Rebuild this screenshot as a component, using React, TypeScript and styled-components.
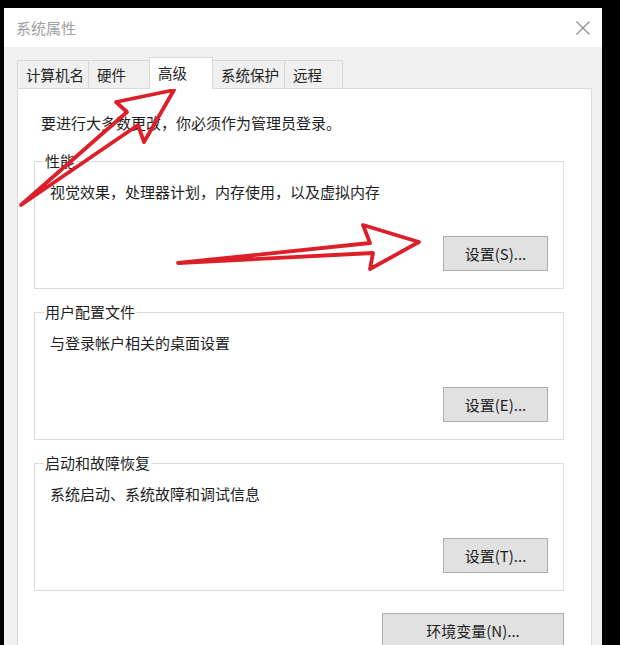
import React from "react";
import styled, { createGlobalStyle } from "styled-components";

const GlobalStyle = createGlobalStyle`
  html, body {
    margin: 0;
    padding: 0;
    background: #000;
  }
  body {
    font-family: "Noto Sans CJK SC", "Noto Sans", sans-serif;
    color: #1e1e1e;
  }
`;

const Page = styled.div`
  position: relative;
  width: 620px;
  height: 645px;
  overflow: hidden;
  background: #000;
  padding: 8px 18px 0 4px;
  box-sizing: border-box;
`;

const Window = styled.div`
  width: 598px;
  height: 700px;
  background: #f0f0f0;
  display: flex;
  flex-direction: column;
`;

const TitleBar = styled.div`
  height: 39px;
  flex: 0 0 39px;
  background: #fff;
  display: flex;
  align-items: center;
  justify-content: space-between;
  padding: 0 11px 0 12px;
  box-sizing: border-box;
`;

const Title = styled.span`
  font-size: 15px;
  line-height: 20px;
  color: #a0a0a0;
`;

const CloseButton = styled.div`
  width: 16px;
  height: 16px;
  display: flex;
  align-items: center;
  justify-content: center;
`;

const Body = styled.div`
  padding: 10px 0 0 13px;
  display: flex;
  flex-direction: column;
`;

const TabStrip = styled.div`
  display: flex;
  align-items: flex-end;
  height: 32px;
  margin-bottom: -1px;
  position: relative;
  z-index: 1;
`;

const Tab = styled.div<{ $w: number; $active?: boolean }>`
  width: ${(p) => p.$w}px;
  box-sizing: border-box;
  height: ${(p) => (p.$active ? 32 : 28)}px;
  margin-bottom: ${(p) => (p.$active ? 0 : 1)}px;
  margin-left: -1px;
  &:first-child {
    margin-left: 0;
  }
  background: ${(p) => (p.$active ? "#fff" : "#f0f0f0")};
  border: 1px solid #d9d9d9;
  border-bottom: none;
  display: flex;
  align-items: center;
  padding: 0 0 ${(p) => (p.$active ? 2 : 0)}px 8px;
  font-size: 14.5px;
  color: #222;
  white-space: nowrap;
  position: relative;
  z-index: ${(p) => (p.$active ? 2 : 1)};
`;

const Panel = styled.div`
  width: 575px;
  box-sizing: border-box;
  background: #fff;
  border: 1px solid #d9d9d9;
  padding: 24px 27px 40px 16px;
  display: flex;
  flex-direction: column;
`;

const Intro = styled.p`
  margin: 0 0 18px 0;
  padding-left: 7px;
  font-size: 15px;
  line-height: 20px;
`;

const Group = styled.fieldset`
  margin: 0 0 13px 0;
  width: 530px;
  box-sizing: border-box;
  border: 1px solid #dcdcdc;
  padding: 0 0 0 9px;
  min-width: 0;
`;

const GroupLabel = styled.legend`
  padding: 0 1px;
  font-size: 15px;
  line-height: 20px;
  color: #1e1e1e;
`;

const GroupBody = styled.div`
  padding: 11px 15px 17px 6px;
  display: flex;
  flex-direction: column;
`;

const Description = styled.div`
  font-size: 15px;
  line-height: 20px;
`;

const ButtonRow = styled.div<{ $top: number }>`
  display: flex;
  justify-content: flex-end;
  margin-top: ${(p) => p.$top}px;
`;

const Button = styled.button<{ $w: number }>`
  width: ${(p) => p.$w}px;
  height: 35px;
  box-sizing: border-box;
  background: #e1e1e1;
  border: 1px solid #adadad;
  border-radius: 0;
  font-family: "Noto Sans CJK SC", "Noto Sans", sans-serif;
  font-size: 15px;
  color: #1e1e1e;
  padding: 0;
  display: flex;
  align-items: center;
  justify-content: center;
`;

const BottomRow = styled.div`
  display: flex;
  justify-content: flex-end;
  width: 530px;
  margin-top: 9px;
`;

const Overlay = styled.svg`
  position: absolute;
  left: 0;
  top: 0;
  width: 620px;
  height: 645px;
  pointer-events: none;
`;

const tabs = [
  { label: "计算机名", w: 72 },
  { label: "硬件", w: 62 },
  { label: "高级", w: 64, active: true },
  { label: "系统保护", w: 73 },
  { label: "远程", w: 59 },
];

const groups = [
  { title: "性能", desc: "视觉效果，处理器计划，内存使用，以及虚拟内存", btn: "设置(S)..." },
  { title: "用户配置文件", desc: "与登录帐户相关的桌面设置", btn: "设置(E)..." },
  { title: "启动和故障恢复", desc: "系统启动、系统故障和调试信息", btn: "设置(T)..." },
];

export default function App() {
  return (
    <>
      <GlobalStyle />
      <Page>
        <Window>
          <TitleBar>
            <Title>系统属性</Title>
            <CloseButton>
              <svg width="14" height="14" viewBox="0 0 14 14">
                <path d="M0.5 0.5 L13.5 13.5 M13.5 0.5 L0.5 13.5" stroke="#8e8e8e" strokeWidth="1.2" fill="none" />
              </svg>
            </CloseButton>
          </TitleBar>
          <Body>
            <TabStrip>
              {tabs.map((t) => (
                <Tab key={t.label} $w={t.w} $active={t.active}>
                  {t.label}
                </Tab>
              ))}
            </TabStrip>
            <Panel>
              <Intro>要进行大多数更改，你必须作为管理员登录。</Intro>
              {groups.map((g) => (
                <Group key={g.title}>
                  <GroupLabel>{g.title}</GroupLabel>
                  <GroupBody>
                    <Description>{g.desc}</Description>
                    <ButtonRow $top={34}>
                      <Button $w={105}>{g.btn}</Button>
                    </ButtonRow>
                  </GroupBody>
                </Group>
              ))}
              <BottomRow>
                <Button $w={182}>环境变量(N)...</Button>
              </BottomRow>
            </Panel>
          </Body>
        </Window>
        <Overlay viewBox="0 0 620 645">
          <g fill="none" stroke="#dc1f28" strokeWidth="3.8" strokeLinejoin="round" strokeLinecap="round">
            <path d="M21 205 L127 112 L116 102 L174 90 L144 142 L138 125 Z" />
            <path d="M178 263 L370 243 L363 225 L419 242 L370 269 L373 253 Z" />
          </g>
        </Overlay>
      </Page>
    </>
  );
}
